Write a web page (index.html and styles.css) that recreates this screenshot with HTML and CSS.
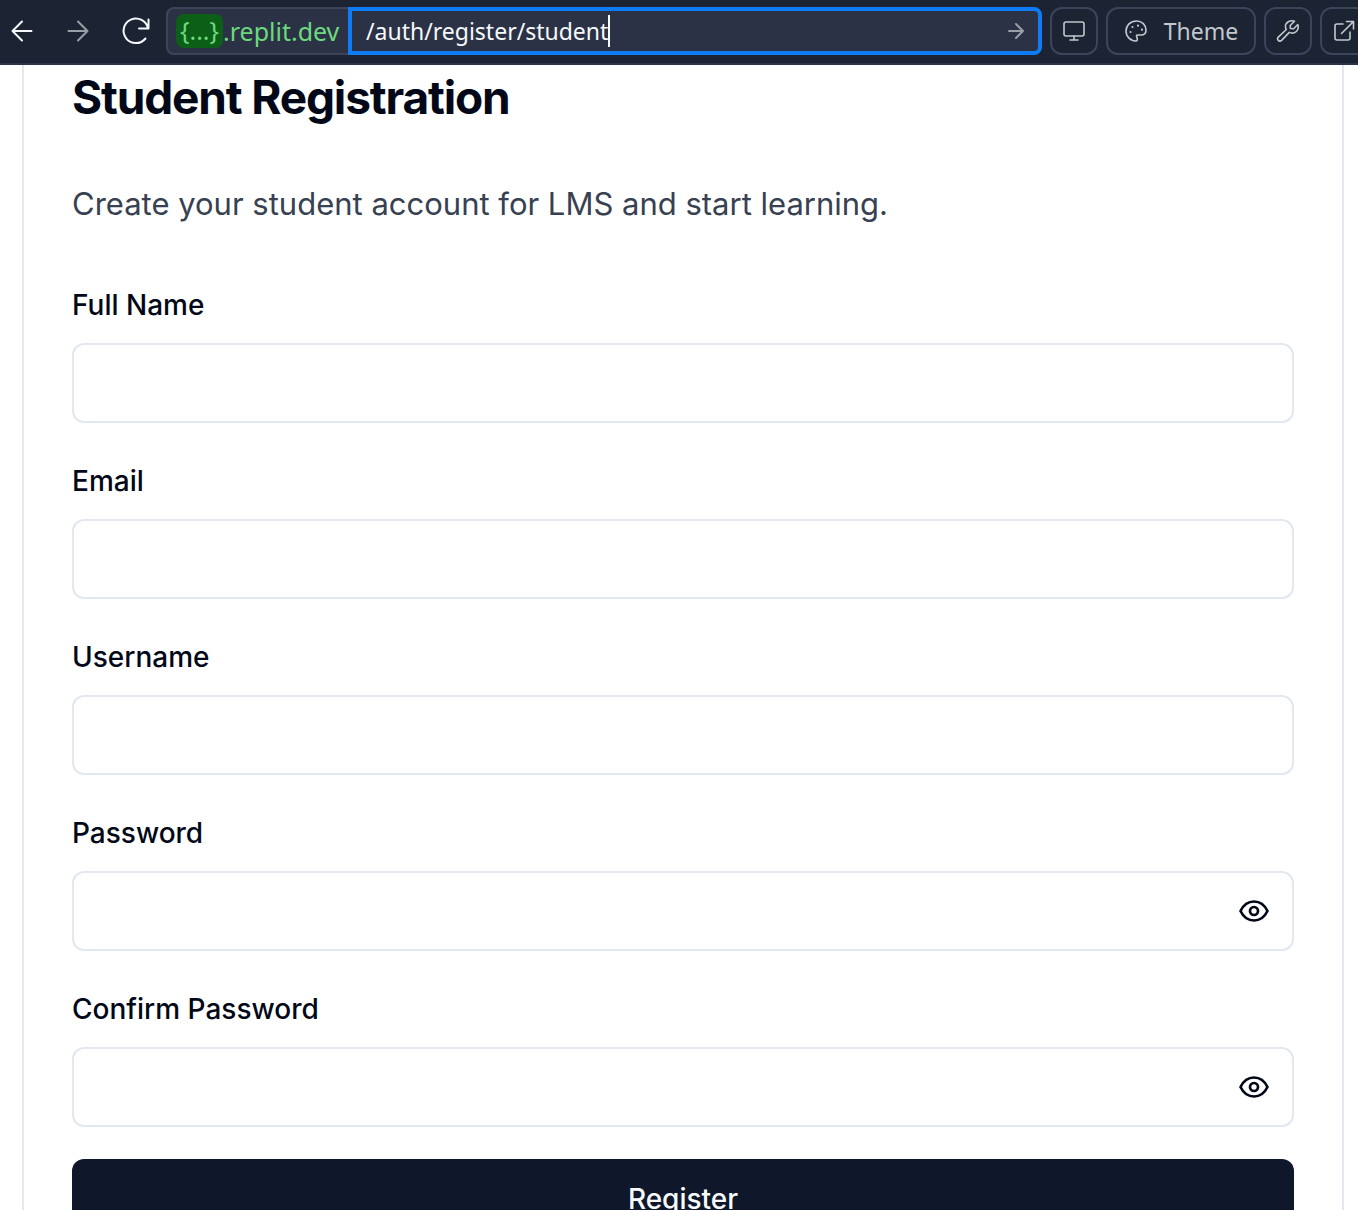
FILE: index.html
```html
<!DOCTYPE html>
<html lang="en">
<head>
<meta charset="utf-8">
<meta name="viewport" content="width=device-width, initial-scale=1">
<title>Student Registration</title>
<link rel="stylesheet" href="styles.css">
</head>
<body>
<header class="toolbar">
  <nav class="history" aria-label="History">
    <button type="button" class="nav-button" aria-label="Back">
      <svg class="icon-nav" viewBox="0 0 32 32"><path d="M25.500 16H6.500M16 6.500L6.500 16l9.500 9.500"/></svg>
    </button>
    <button type="button" class="nav-button nav-button-muted" aria-label="Forward">
      <svg class="icon-nav" viewBox="0 0 32 32"><path d="M6.500 16h19M16 6.500l9.500 9.500-9.500 9.500"/></svg>
    </button>
    <button type="button" class="nav-button" aria-label="Reload">
      <svg class="icon-nav" viewBox="0 0 32 32"><path d="M30.500 4.500v9H21M30 13.500A12.300 12.300 0 1 0 27.500 23.500"/></svg>
    </button>
  </nav>
  <form class="address">
    <span class="host"><span class="host-short">{...}</span>.replit.dev</span>
    <div class="path">
      <input class="path-input" type="text" aria-label="Path" value="/auth/register/student">
      <button type="button" class="go-button" aria-label="Go">
        <svg class="icon-go" viewBox="0 0 24 24"><path d="M5 12h14M12 5l7 7-7 7"/></svg>
      </button>
    </div>
  </form>
  <div class="tools">
    <button type="button" class="tool-button" aria-label="Device size">
      <svg class="icon-tool" viewBox="0 0 24 24"><rect x="2" y="3" width="20" height="14" rx="2"/><path d="M12 17v4M8 21h8"/></svg>
    </button>
    <button type="button" class="tool-button tool-button-wide">
      <svg class="icon-tool" viewBox="0 0 24 24"><path d="M12.500 22C6.500 22 2 17.500 2 12S6.500 2 12.500 2C18 2 22 6 22 11c0 3.500-2 5-5 5h-3.500c-1 0-1.300 1-.7 2 .8 1.500.7 4-.3 4z"/><g class="dots"><circle cx="6.500" cy="13" r="1.100"/><circle cx="8.500" cy="8" r="1.100"/><circle cx="14" cy="6.700" r="1.100"/><circle cx="18" cy="10.700" r="1.100"/></g></svg>
      Theme
    </button>
    <button type="button" class="tool-button" aria-label="Developer tools">
      <svg class="icon-tool" viewBox="0 0 24 24"><path d="M18.500 2.300l-4.300 4.200.2 3 3.200.2 4.200-4.200c1.300 3.500-.3 7-3.500 8.200-1.800.7-3.500.4-5-.3l-7.700 8c-1 .9-2.500.9-3.300 0-.9-.9-.9-2.300 0-3.300l8-7.600c-1.700-3.200-.7-6.300 2-7.800 2-1.100 4.200-1.200 6.200-.4z"/></svg>
    </button>
    <button type="button" class="tool-button" aria-label="Open in new tab">
      <svg class="icon-tool" viewBox="0 0 24 24"><path d="M14.500 2.500h7V10M21.500 2.500L9.500 14.500M11 5H5a2 2 0 0 0-2 2v12a2 2 0 0 0 2 2h11a2 2 0 0 0 2-2v-6"/></svg>
    </button>
  </div>
</header>
<main class="page">
  <section class="card">
    <h1 class="title">Student Registration</h1>
    <p class="lead">Create your student account for LMS and start learning.</p>
    <form class="form">
      <div class="field">
        <label class="label" for="name">Full Name</label>
        <div class="control"><input class="input" id="name" type="text"></div>
      </div>
      <div class="field">
        <label class="label" for="email">Email</label>
        <div class="control"><input class="input" id="email" type="email"></div>
      </div>
      <div class="field">
        <label class="label" for="username">Username</label>
        <div class="control"><input class="input" id="username" type="text"></div>
      </div>
      <div class="field">
        <label class="label" for="password">Password</label>
        <div class="control">
          <input class="input" id="password" type="password">
          <button type="button" class="reveal" aria-label="Show password">
            <svg class="icon-eye" viewBox="0 0 32 32"><path d="M2.500 16C5.500 9.800 10.200 6.500 16 6.500S26.500 9.800 29.500 16C26.500 22.200 21.800 25.500 16 25.500S5.500 22.200 2.500 16z"/><circle cx="16" cy="16" r="4"/></svg>
          </button>
        </div>
      </div>
      <div class="field">
        <label class="label" for="confirm">Confirm Password</label>
        <div class="control">
          <input class="input" id="confirm" type="password">
          <button type="button" class="reveal" aria-label="Show confirmed password">
            <svg class="icon-eye" viewBox="0 0 32 32"><path d="M2.500 16C5.500 9.800 10.200 6.500 16 6.500S26.500 9.800 29.500 16C26.500 22.200 21.800 25.500 16 25.500S5.500 22.200 2.500 16z"/><circle cx="16" cy="16" r="4"/></svg>
          </button>
        </div>
      </div>
      <button type="submit" class="submit">Register</button>
    </form>
  </section>
</main>
</body>
</html>
```
FILE: styles.css
```css
*, *::before, *::after { box-sizing: border-box; }

body {
  margin: 0;
  height: 100vh;
  display: flex;
  flex-direction: column;
  overflow: hidden;
  background: #fff;
  color: #020817;
  font-family: Inter, "Liberation Sans", sans-serif;
}

button, input { font: inherit; color: inherit; }
button { padding: 0; border: 0; background: none; cursor: pointer; }
svg { display: block; fill: none; stroke: currentColor; stroke-linecap: round; stroke-linejoin: round; }

/* Browser toolbar */
.toolbar {
  flex: none;
  display: flex;
  padding: 7px 0 8px;
  overflow: hidden;
  border-bottom: 2px solid #2b3245;
  background: #1c2333;
  color: #f5f9fc;
  font-family: "Noto Sans", "Liberation Sans", sans-serif;
  font-size: 23px;
  line-height: 32px;
}

.history { display: flex; gap: 12px; margin-right: 10px; }
.nav-button { width: 44px; height: 48px; display: grid; place-items: center; }
.nav-button-muted { color: #9a9ea6; }
.icon-nav { width: 32px; height: 32px; stroke-width: 2; }

.address {
  flex: 1;
  min-width: 0;
  display: flex;
  height: 48px;
  border-radius: 8px;
  background: #2b3245;
}
.host {
  display: flex;
  align-items: center;
  width: 182px;
  padding-left: 8px;
  border: 2px solid #3c445c;
  border-right: 0;
  border-radius: 8px 0 0 8px;
  color: #6cd97e;
  font-size: 25px;
}
.host-short {
  width: 47px;
  height: 34px;
  border-radius: 8px;
  background: #0c5f17;
  text-align: center;
}
.path {
  flex: 1;
  min-width: 0;
  display: flex;
  align-items: center;
  justify-content: space-between;
  padding: 0 8px 0 14px;
  border: 4px solid #0f7bf4;
  border-radius: 0 8px 8px 0;
}
.path-input {
  field-sizing: content;
  height: 32px;
  padding: 0;
  border: 0;
  border-right: 2px solid #f5f9fc;
  outline: 0;
  background: none;
}
.go-button { width: 28px; height: 32px; display: grid; place-items: center; color: #9a9ea6; }
.icon-go { width: 24px; height: 24px; stroke-width: 2; }

.tools { flex: none; display: flex; gap: 8px; margin: 0 -10px 0 8px; }
.tool-button {
  display: flex;
  align-items: center;
  justify-content: center;
  gap: 16px;
  width: 48px;
  height: 48px;
  border: 2px solid #3c445c;
  border-radius: 12px;
  color: #c2c8cc;
}
.tool-button-wide { width: 150px; }
.icon-tool { width: 24px; height: 24px; stroke-width: 1.6; }
.dots { fill: currentColor; stroke: none; }

/* Registration card */
.page { flex: 1; min-height: 0; overflow: hidden; padding: 0 14px 0 22px; }
.card { padding: 0 48px 48px; border: 2px solid #e2e8f0; border-top: 0; }
.title { margin: 0; font-size: 46px; line-height: 64px; font-weight: 700; letter-spacing: -0.025em; }
.lead { margin: 51px 0 0; font-size: 31px; line-height: 48px; color: #374151; }
.form { display: flex; flex-direction: column; gap: 32px; margin-top: 63px; }
.field { display: flex; flex-direction: column; gap: 24px; }
.label { font-size: 28px; line-height: 28px; font-weight: 500; }
.control { position: relative; }
.field:not(:first-child) { margin-top: 12px; }
.input {
  display: block;
  width: 100%;
  height: 80px;
  padding: 0 24px;
  border: 2px solid #e2e8f0;
  border-radius: 12px;
  background: #fff;
  font-size: 28px;
}
.reveal {
  position: absolute;
  inset: 0 0 0 auto;
  width: 80px;
  display: grid;
  place-items: center;
}
.icon-eye { width: 32px; height: 32px; stroke-width: 2.7; }
.submit {
  height: 80px;
  border-radius: 12px;
  background: #0f172a;
  color: #f8fafc;
  font-size: 28px;
  font-weight: 500;
}
```
